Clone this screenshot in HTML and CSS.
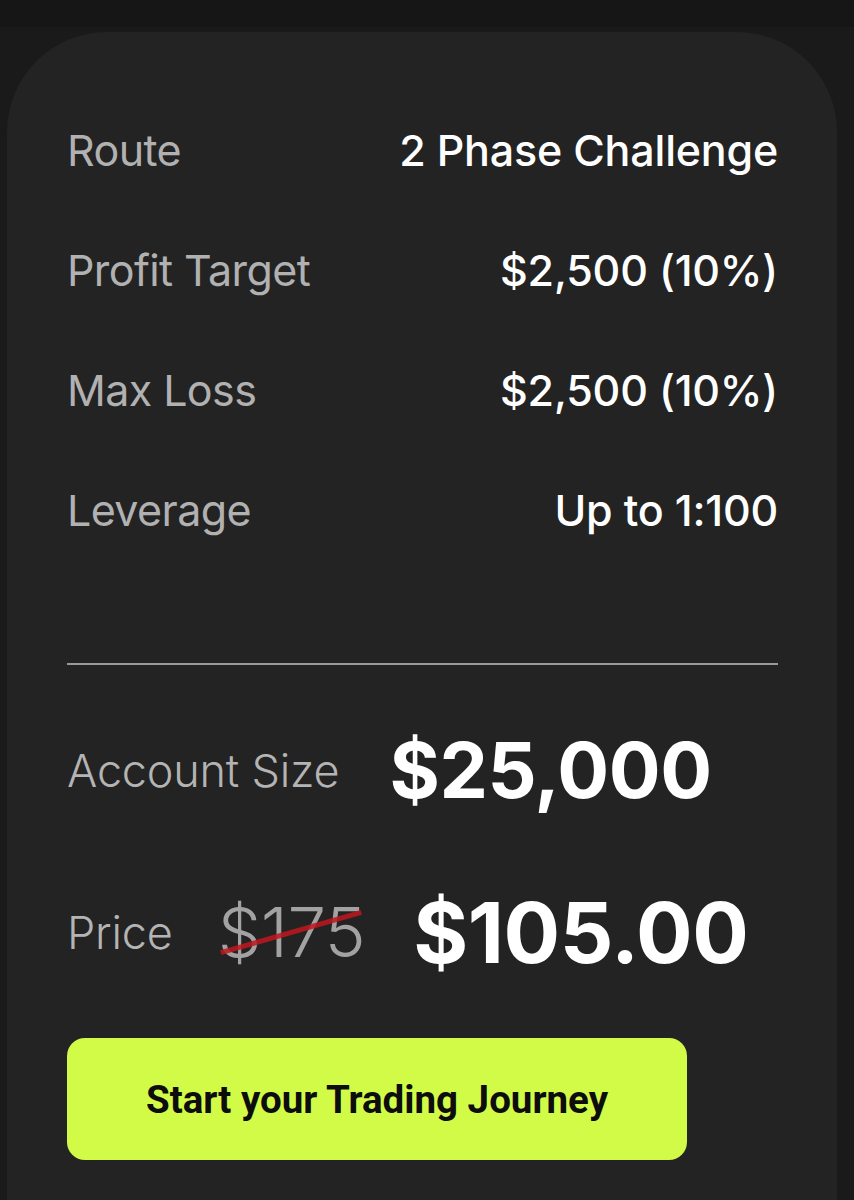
FILE: index.html
```html
<!DOCTYPE html>
<html lang="en">
<head>
<meta charset="utf-8">
<title>Challenge</title>
<link rel="stylesheet" href="styles.css">
</head>
<body>
<div class="shell">
  <section class="card">
    <div class="rows">
      <div class="row"><span class="label">Route</span><span class="value">2 Phase Challenge</span></div>
      <div class="row"><span class="label">Profit Target</span><span class="value">$2,500 (10%)</span></div>
      <div class="row"><span class="label">Max Loss</span><span class="value">$2,500 (10%)</span></div>
      <div class="row"><span class="label">Leverage</span><span class="value">Up to 1:100</span></div>
    </div>
    <hr class="divider">
    <div class="size-row">
      <span class="label alt">Account Size</span>
      <span class="big">$25,000</span>
    </div>
    <div class="price-row">
      <span class="label alt">Price</span>
      <span class="old">$175</span>
      <span class="big price">$105.00</span>
    </div>
    <button class="cta">Start your Trading Journey</button>
  </section>
</div>
</body>
</html>
```

FILE: styles.css
```css
* { box-sizing: border-box; }
html, body { margin: 0; padding: 0; }
body {
  background: #161616;
  width: 854px;
  height: 1200px;
  overflow: hidden;
  font-family: "Inter", "Liberation Sans", sans-serif;
}
.shell {
  margin-top: 27px;
  height: 1173px;
  padding: 5px 17px 0 7px;
  background: #1a1a1a;
}
.card {
  background: #232323;
  border-radius: 100px 100px 0 0;
  height: 1200px;
  padding: 58px 59px 0 60px;
}
.rows { display: flex; flex-direction: column; }
.row {
  height: 120px;
  display: flex;
  align-items: center;
  justify-content: space-between;
}
.label {
  color: #b1b1b1;
  font-size: 43px;
  font-weight: 400;
  letter-spacing: -0.6px;
}
.value {
  color: #ffffff;
  font-size: 43px;
  font-weight: 500;
  letter-spacing: -0.2px;
}
.divider {
  margin: 93px 0 0 0;
  border: 0;
  height: 2px;
  background: #9a9a9a;
}
.size-row {
  margin-top: 62px;
  height: 86px;
  display: flex;
  align-items: center;
  gap: 50px;
}
.label.alt {
  font-size: 45px;
  font-weight: 300;
  letter-spacing: -0.2px;
  color: #b4b4b4;
}
.big {
  color: #fff;
  font-size: 77px;
  font-weight: 700;
  letter-spacing: -0.5px;
}
.price-row {
  margin-top: 74px;
  height: 90px;
  display: flex;
  align-items: center;
}
.old {
  position: relative;
  margin-left: 45px;
  color: #a2a2a2;
  font-size: 69px;
  font-weight: 300;
  letter-spacing: -0.5px;
}
.old::after {
  content: "";
  position: absolute;
  left: 0;
  top: 48%;
  width: 146px;
  height: 5px;
  background: rgba(190, 24, 30, 0.85);
  transform: rotate(-16deg);
  transform-origin: center;
}
.big.price {
  margin-left: 48px;
  font-size: 84px;
}
.cta {
  display: block;
  margin-top: 61px;
  width: 620px;
  height: 122px;
  border: 0;
  border-radius: 18px;
  background: #d2fb48;
  color: #0d0d0d;
  font-family: "Roboto", "Liberation Sans", sans-serif;
  font-weight: 700;
  font-size: 38.5px;
  cursor: pointer;
}
```
